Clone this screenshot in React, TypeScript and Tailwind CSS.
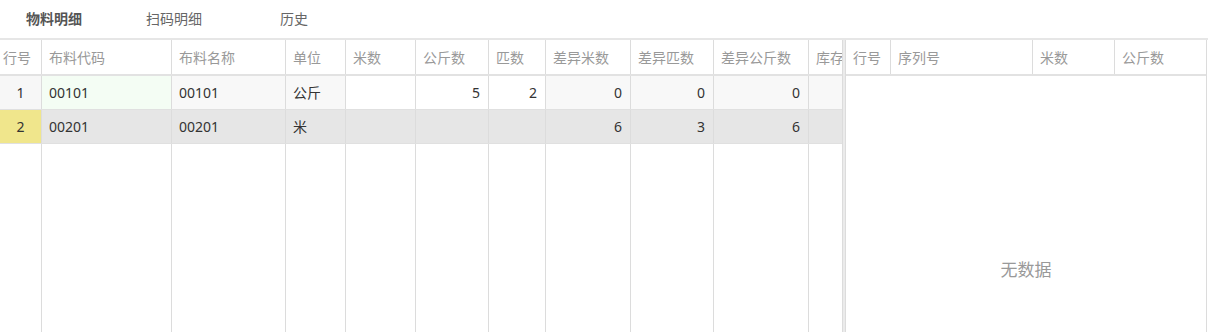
import React from 'react';

type Col = { title: string; w: string; align?: 'left' | 'right' | 'center'; editable?: boolean };

const cols: Col[] = [
  { title: '行号', w: 'w-[42px]', align: 'center' },
  { title: '布料代码', w: 'w-[130px]' },
  { title: '布料名称', w: 'w-[114px]' },
  { title: '单位', w: 'w-[60px]' },
  { title: '米数', w: 'w-[70px]', align: 'right', editable: true },
  { title: '公斤数', w: 'w-[73px]', align: 'right', editable: true },
  { title: '匹数', w: 'w-[57px]', align: 'right', editable: true },
  { title: '差异米数', w: 'w-[85px]', align: 'right' },
  { title: '差异匹数', w: 'w-[83px]', align: 'right' },
  { title: '差异公斤数', w: 'w-[95px]', align: 'right' },
  { title: '库存', w: 'w-[60px]', align: 'right' },
];

const rows = [
  ['1', '00101', '00101', '公斤', '', '5', '2', '0', '0', '0', ''],
  ['2', '00201', '00201', '米', '', '', '', '6', '3', '6', ''],
];

const rightCols = [
  { title: '行号', w: 'w-[45px]' },
  { title: '序列号', w: 'w-[142px]' },
  { title: '米数', w: 'w-[82px]' },
  { title: '公斤数', w: 'flex-1' },
];

const alignCls = (a?: string) =>
  a === 'right' ? 'justify-end pr-2' : a === 'center' ? 'justify-center' : 'justify-start pl-[7px]';

function cellBg(r: number, c: number, col: Col) {
  if (r === 1) return c === 0 ? 'bg-[#f0e68c]' : 'bg-[#e6e6e6]';
  if (c === 0) return 'bg-[#f7f7f7]';
  if (c === 1) return 'bg-[#f4fdf4]';
  if (col.editable) return 'bg-white';
  return 'bg-[#f8f8f8]';
}

export default function App() {
  return (
    <div
      className="h-[332px] w-[1208px] overflow-hidden bg-white text-[14px] text-[#333]"
      style={{ fontFamily: '"Noto Sans", "Noto Sans CJK SC", sans-serif' }}
    >
      {/* tabs */}
      <div className="flex h-[40px] items-center gap-[12px] border-b-2 border-[#e6e6e6] pb-[2px]">
        <div className="w-[108px] text-center text-[14px] font-bold text-[#555]">物料明细</div>
        <div className="w-[108px] text-center text-[14px] text-[#666]">扫码明细</div>
        <div className="w-[108px] text-center text-[14px] text-[#666]">历史</div>
      </div>

      <div className="flex h-[292px]">
        {/* left grid */}
        <div className="flex h-full w-[843px] flex-col overflow-hidden border-r border-[#dcdcdc]">
          <div className="flex h-[36px] shrink-0 border-b-2 border-[#e2e2e2]">
            {cols.map((c, i) => (
              <div
                key={i}
                className={`${c.w} flex shrink-0 items-center border-r border-[#dcdcdc] text-[#999] ${
                  i === 0 ? 'justify-start pl-[3px]' : 'justify-start pl-[7px]'
                }`}
              >
                <span className="whitespace-nowrap">{c.title}</span>
              </div>
            ))}
          </div>
          {rows.map((r, ri) => (
            <div key={ri} className="flex h-[34px] shrink-0 border-b border-[#e0e0e0]">
              {cols.map((c, ci) => (
                <div
                  key={ci}
                  className={`${c.w} ${cellBg(ri, ci, c)} ${alignCls(c.align)} flex shrink-0 items-center border-r border-[#dcdcdc]`}
                >
                  {r[ci]}
                </div>
              ))}
            </div>
          ))}
          <div className="flex flex-1">
            {cols.map((c, i) => (
              <div key={i} className={`${c.w} shrink-0 border-r border-[#dcdcdc]`} />
            ))}
          </div>
        </div>

        <div className="w-[2px] bg-[#ebebeb]" />

        {/* right grid */}
        <div className="flex h-full w-[362px] flex-col border-x border-[#dcdcdc]">
          <div className="flex h-[36px] shrink-0 border-b-2 border-[#e2e2e2]">
            {rightCols.map((c, i) => (
              <div
                key={i}
                className={`${c.w} flex shrink-0 items-center border-[#dcdcdc] pl-[7px] text-[#999] ${
                  i < rightCols.length - 1 ? 'border-r' : ''
                }`}
              >
                {c.title}
              </div>
            ))}
          </div>
          <div className="flex-1 pt-[181px] text-center text-[17px] text-[#999]">无数据</div>
        </div>
      </div>
    </div>
  );
}
